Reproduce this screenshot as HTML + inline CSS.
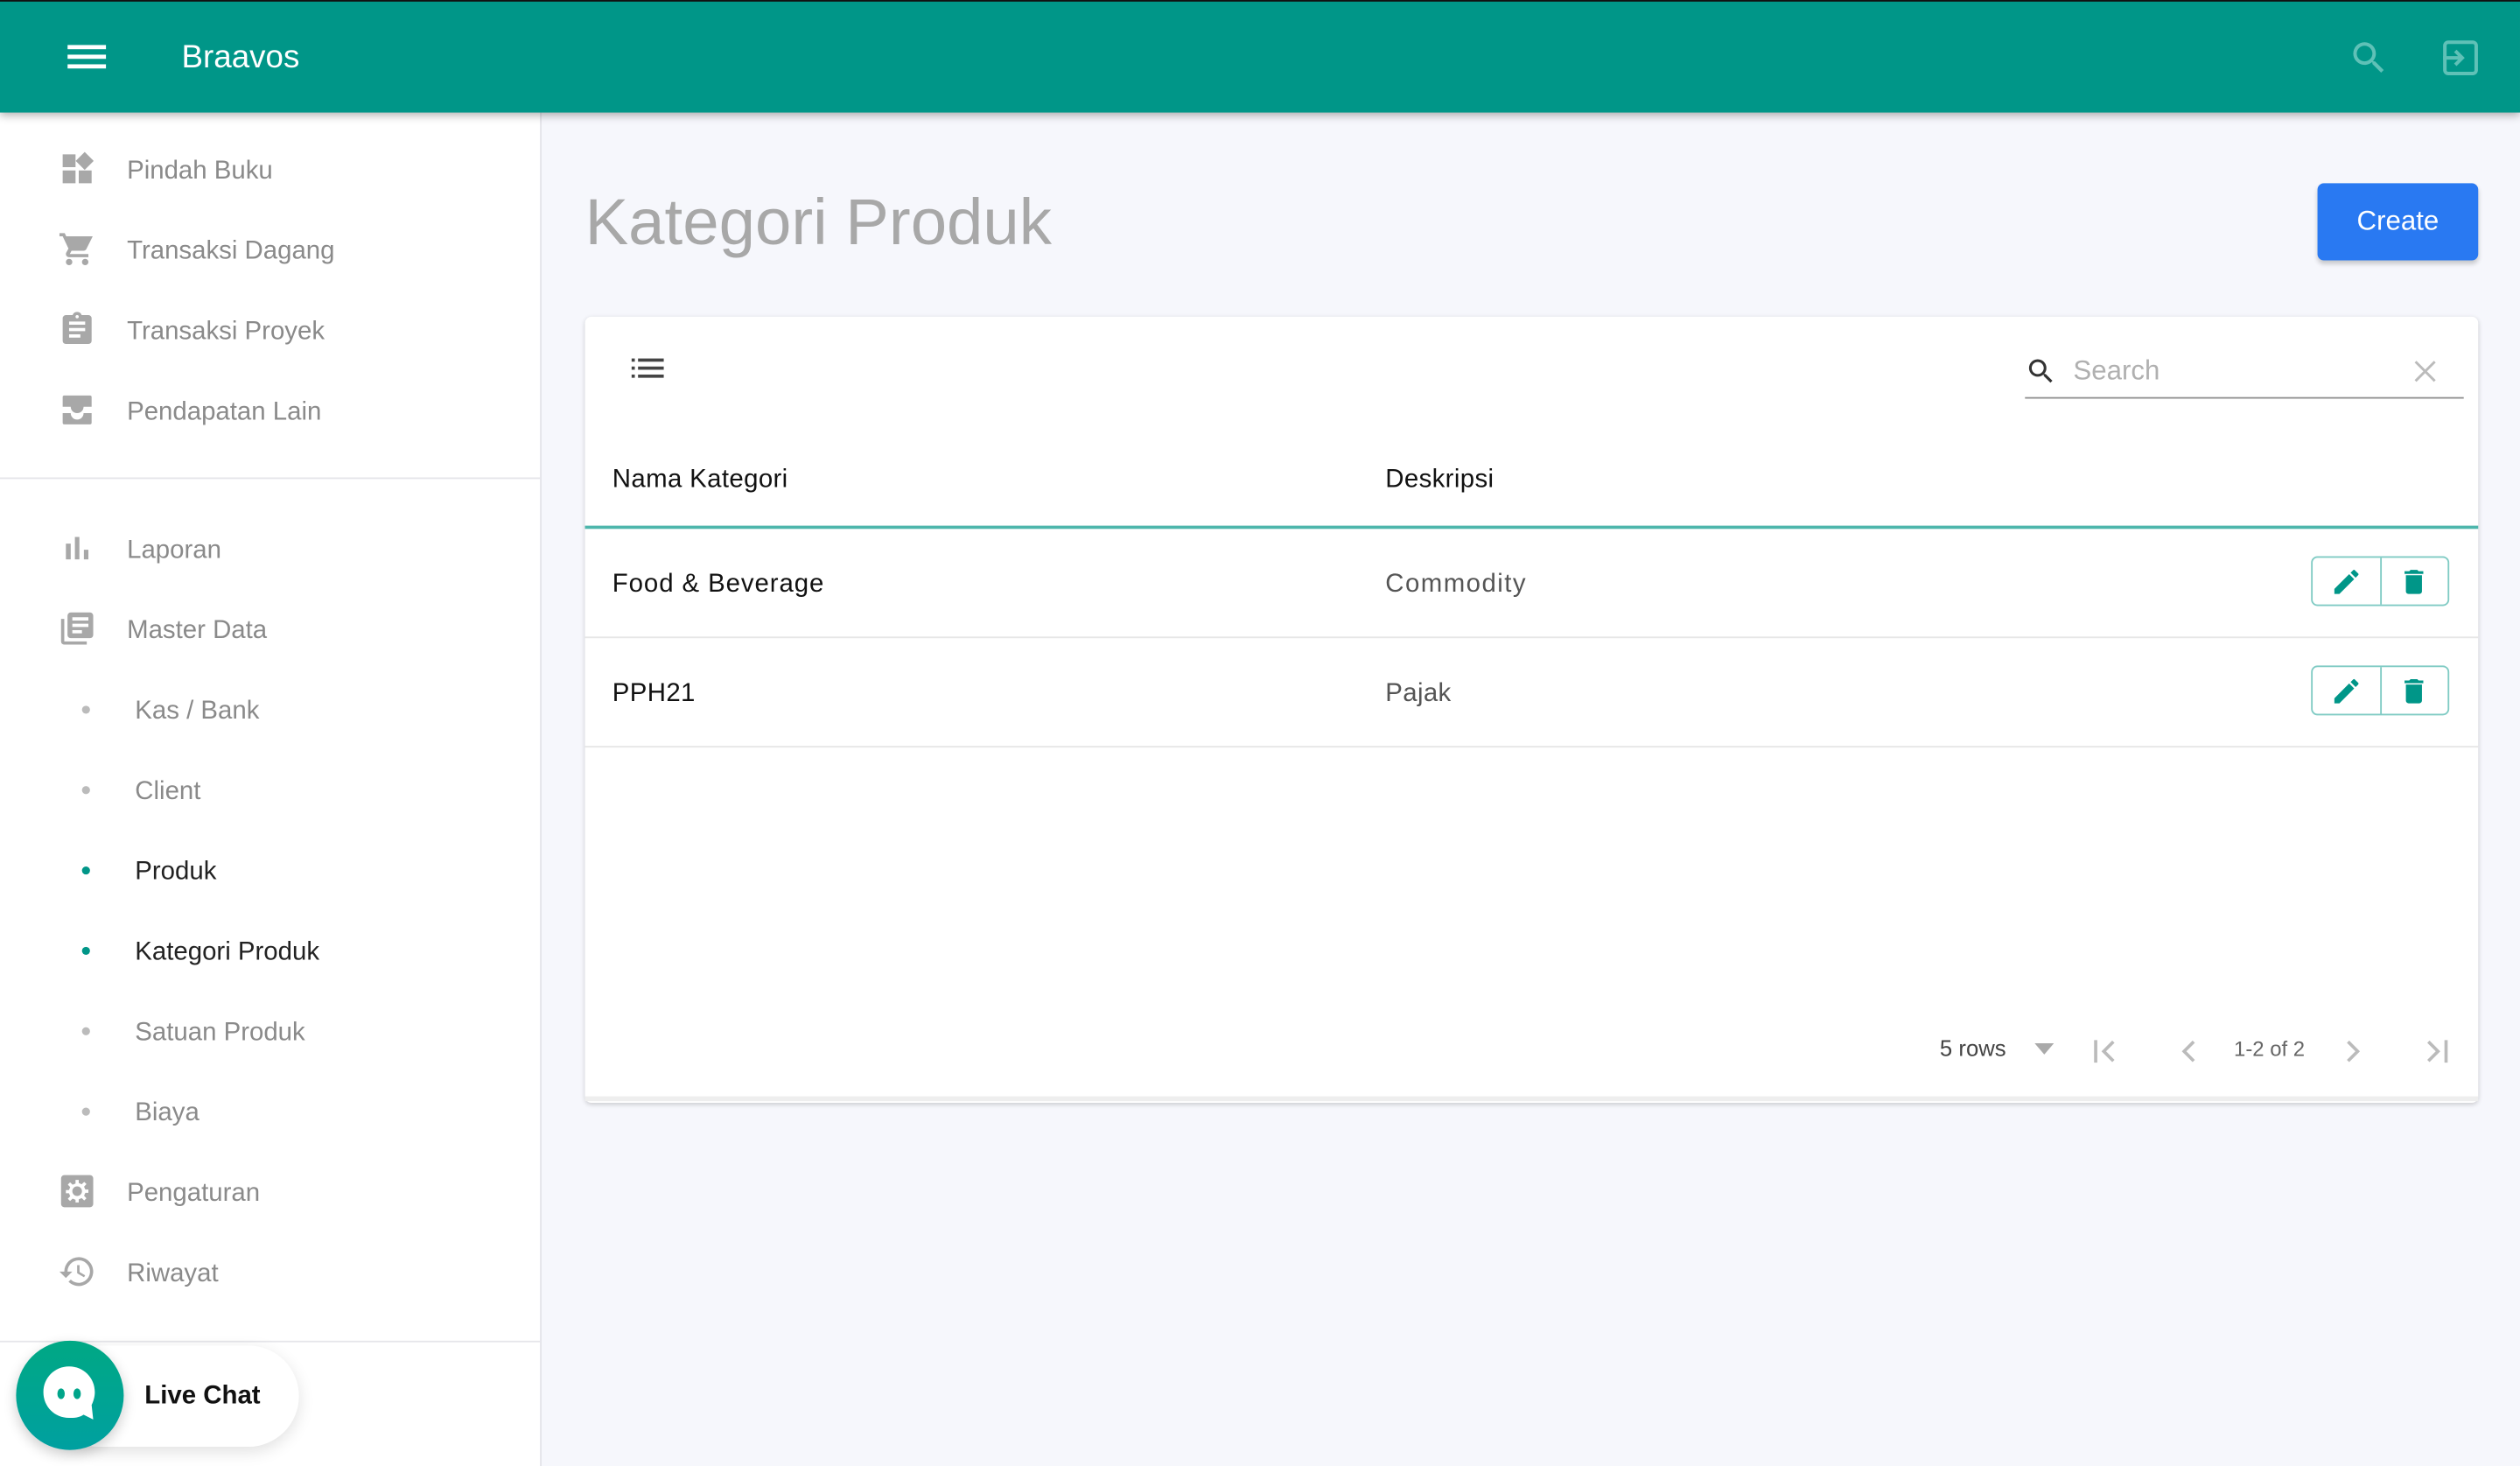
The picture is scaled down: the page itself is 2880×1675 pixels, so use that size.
<!DOCTYPE html>
<html><head><meta charset="utf-8"><style>
*{box-sizing:border-box;margin:0;padding:0}
html,body{width:2880px;height:1675px;overflow:hidden;background:#f6f7fc;font-family:"Liberation Sans",sans-serif}
#w{position:absolute;left:0;top:0;width:1568px;height:912px;transform:scale(1.83673);transform-origin:0 0;background:#f6f7fc}
.abs{position:absolute}
.top{left:0;top:0;width:1568px;height:70px;background:#009688;box-shadow:0 2px 5px rgba(0,0,0,.3);z-index:5;border-top:1px solid #111}
.side{left:0;top:70px;width:337px;height:842px;background:#fff;border-right:1px solid #e4e4ea}
.it{position:absolute;left:0;width:336px;height:50px;display:flex;align-items:center;font-size:16px;color:#8a8a8a}
.it svg{position:absolute;left:36px;width:24px;height:24px;fill:#a8a8a8}
.it span{position:absolute;left:79px;top:18px}
.sub span{left:84px}
.dot{position:absolute;left:51px;width:5px;height:5px;border-radius:50%;background:#bbb}
.act{color:#222}.act .dot{background:#009688}
.card{left:364px;top:197px;width:1178px;height:489px;background:#fff;border-radius:4px;box-shadow:0 1px 3px rgba(0,0,0,.18)}
.td{position:absolute;font-size:16px;color:#111;letter-spacing:.2px}
.btns{position:absolute;left:1074px;width:86px;height:31px;border:1px solid #80cbc4;border-radius:4px}
.btns i{position:absolute;left:42px;top:0;width:1px;height:29px;background:#80cbc4}
.btns svg{position:absolute;top:5px;width:20px;height:20px;fill:#009688}
.pg{position:absolute;top:447px;font-size:14px;color:#555}
</style></head><body><div id="w">
<div class="abs top">
<svg class="abs" style="left:42px;top:24px" width="24" height="20" viewBox="0 0 24 20"><rect x="0" y="3" width="24" height="2.6" fill="#fff"/><rect x="0" y="9" width="24" height="2.6" fill="#fff"/><rect x="0" y="15" width="24" height="2.6" fill="#fff"/></svg>
<div class="abs" style="left:113px;top:24px;color:#fff;font-size:20px">Braavos</div>
<svg class="abs" style="left:1461px;top:22px" width="26" height="26" viewBox="0 0 24 24" fill="#5fc1b7"><path d="M15.5 14h-.79l-.28-.27A6.470 6.47 0 0016 9.5 6.5 6.5 0 109.5 16c1.61 0 3.09-.59 4.23-1.570l.27.28v.79l5 4.99L20.49 19l-4.99-5zm-6 0C7.01 14 5 11.99 5 9.5S7.01 5 9.5 5 14 7.01 14 9.5 11.99 14 9.5 14z"/></svg>
<svg class="abs" style="left:1518px;top:22px" width="26" height="26" viewBox="0 0 24 24" fill="none" stroke="#5fc1b7" stroke-width="2"><rect x="3" y="3" width="18" height="18" rx="2"/><path d="M2 12h11M9 8l4 4-4 4" /></svg>
</div>
<div class="abs side">
<div class="it" style="top:10px"><svg viewBox="0 0 24 24"><path d="M3 3h8v8H3zM3 13h8v8H3zM13 13h8v8h-8zM16.7 1.5l5.6 5.6-5.6 5.6-5.6-5.6z"/></svg><span>Pindah Buku</span></div>
<div class="it" style="top:60px"><svg viewBox="0 0 24 24"><path d="M7 18a2 2 0 100 4 2 2 0 000-4zM1 2v2h2l3.6 7.59-1.35 2.45A2 2 0 007 17h12v-2H7.42l1.1-2h7.45c.75 0 1.41-.41 1.75-1.030L21.7 4H5.21l-.94-2H1zm16 16a2 2 0 100 4 2 2 0 000-4z"/></svg><span>Transaksi Dagang</span></div>
<div class="it" style="top:110px"><svg viewBox="0 0 24 24"><path d="M19 3h-4.18A3 3 0 0012 1a3 3 0 00-2.82 2H5a2 2 0 00-2 2v14a2 2 0 002 2h14a2 2 0 002-2V5a2 2 0 00-2-2zm-7 0a1 1 0 110 2 1 1 0 010-2zm2 14H7v-2h7v2zm3-4H7v-2h10v2zm0-4H7V7h10v2z"/></svg><span>Transaksi Proyek</span></div>
<div class="it" style="top:160px"><svg viewBox="0 0 24 24"><path d="M20 3H4a1 1 0 00-1 1v6h5a4 4 0 008 0h5V4a1 1 0 00-1-1zM3 14v6a1 1 0 001 1h16a1 1 0 001-1v-6h-5a4 4 0 01-8 0z"/></svg><span>Pendapatan Lain</span></div>
<div class="abs" style="left:0;top:227px;width:336px;height:1px;background:#e6e6ea"></div>
<div class="it" style="top:246px"><svg viewBox="0 0 24 24"><path d="M5 9.2h3V19H5zM10.6 5h2.8v14h-2.8zm5.6 8H19v6h-2.8z"/></svg><span>Laporan</span></div>
<div class="it" style="top:296px"><svg viewBox="0 0 24 24"><path d="M4 6H2v14a2 2 0 002 2h14v-2H4V6zm16-4H8a2 2 0 00-2 2v12a2 2 0 002 2h12a2 2 0 002-2V4a2 2 0 00-2-2zm-1 9H9V9h10v2zm-4 4H9v-2h6v2zm4-8H9V5h10v2z"/></svg><span>Master Data</span></div>
<div class="it sub" style="top:346px"><i class="dot"></i><span>Kas / Bank</span></div>
<div class="it sub" style="top:396px"><i class="dot"></i><span>Client</span></div>
<div class="it sub act" style="top:446px"><i class="dot"></i><span>Produk</span></div>
<div class="it sub act" style="top:496px"><i class="dot"></i><span>Kategori Produk</span></div>
<div class="it sub" style="top:546px"><i class="dot"></i><span>Satuan Produk</span></div>
<div class="it sub" style="top:596px"><i class="dot"></i><span>Biaya</span></div>
<div class="it" style="top:646px"><svg viewBox="0 0 24 24"><path d="M4 2h16a2 2 0 012 2v16a2 2 0 01-2 2H4a2 2 0 01-2-2V4a2 2 0 012-2zm8 7a3 3 0 100 6 3 3 0 000-6zm-1-4v2.2l-1.8.8-1.6-1.5-1.4 1.4 1.5 1.6-.8 1.8H5v2h1.9l.8 1.8-1.5 1.6 1.4 1.4 1.6-1.5 1.8.8V19h2v-1.9l1.8-.8 1.6 1.5 1.4-1.4-1.5-1.6.8-1.8H19v-2h-1.9l-.8-1.8 1.5-1.6-1.4-1.4-1.6 1.5-1.8-.8V5z"/></svg><span>Pengaturan</span></div>
<div class="it" style="top:696px"><svg viewBox="0 0 24 24"><path d="M13 3a9 9 0 00-9 9H1l3.89 3.89.07.14L9 12H6a7 7 0 112.05 4.95l-1.42 1.42A9 9 0 1013 3zm-1 5v5l4.28 2.54.72-1.21-3.5-2.08V8H12z"/></svg><span>Riwayat</span></div>
<div class="abs" style="left:0;top:764px;width:336px;height:1px;background:#e6e6ea"></div>
<div class="abs" style="left:30px;top:767px;width:156px;height:63px;background:#fff;border-radius:32px;box-shadow:0 3px 10px rgba(0,0,0,.12)"></div>
<div class="abs" style="left:10px;top:764px;width:67px;height:68px;border-radius:50%;background:linear-gradient(#00a884,#00a0a0);box-shadow:0 3px 8px rgba(0,0,0,.2)">
<svg class="abs" style="left:14px;top:15px" width="40" height="38" viewBox="0 0 40 38"><path d="M19 1C28 1 35 8 35 17c0 3-1 6-2 8l1 9-6-3c-3 2-6 2-9 2C10 33 3 26 3 17S10 1 19 1z" fill="#fff"/><ellipse cx="14" cy="18" rx="2.3" ry="3.3" fill="#00a58a"/><ellipse cx="24" cy="18" rx="2.3" ry="3.3" fill="#00a58a"/></svg></div>
<div class="abs" style="left:90px;top:790px;font-size:16px;font-weight:bold;color:#111">Live Chat</div>
</div>
<div class="abs" style="left:364px;top:115px;font-size:40.5px;color:#a8a8a8">Kategori Produk</div>
<div class="abs" style="left:1442px;top:114px;width:100px;height:48px;background:#2979f2;border-radius:4px;color:#fff;font-size:17px;display:flex;align-items:center;justify-content:center;box-shadow:0 2px 3px rgba(0,0,0,.2)">Create</div>
<div class="abs card">
<svg class="abs" style="left:28px;top:23px" width="22" height="18" viewBox="0 0 22 18" fill="#444"><rect x="1" y="3" width="2" height="2"/><rect x="5" y="3" width="16" height="2"/><rect x="1" y="8" width="2" height="2"/><rect x="5" y="8" width="16" height="2"/><rect x="1" y="13" width="2" height="2"/><rect x="5" y="13" width="16" height="2"/></svg>
<svg class="abs" style="left:896px;top:24px" width="20" height="20" viewBox="0 0 24 24" fill="#333"><path d="M15.5 14h-.79l-.28-.27A6.47 6.47 0 0016 9.5 6.5 6.5 0 109.5 16c1.61 0 3.09-.59 4.23-1.57l.27.28v.79l5 4.99L20.49 19l-4.99-5zm-6 0C7.01 14 5 11.99 5 9.5S7.01 5 9.5 5 14 7.01 14 9.5 11.99 14 9.5 14z"/></svg>
<div class="abs" style="left:926px;top:24px;font-size:17px;color:#b0b0b0">Search</div>
<svg class="abs" style="left:1138px;top:27px" width="14" height="14" viewBox="0 0 14 14" stroke="#bbb" stroke-width="1.6"><path d="M1 1l12 12M13 1L1 13"/></svg>
<div class="abs" style="left:896px;top:50px;width:273px;height:1px;background:#8f8f8f"></div>
<div class="td" style="left:17px;top:93px">Nama Kategori</div>
<div class="td" style="left:498px;top:93px">Deskripsi</div>
<div class="abs" style="left:0;top:130px;width:1178px;height:2px;background:#4db6ac"></div>
<div class="td" style="left:17px;top:158px;letter-spacing:.5px">Food &amp; Beverage</div>
<div class="td" style="left:498px;top:158px;color:#555;letter-spacing:.8px">Commodity</div>
<div class="btns" style="top:149px"><i></i><svg style="left:11px" viewBox="0 0 24 24"><path d="M3 17.25V21h3.75L17.8 9.94l-3.75-3.75zM20.7 7.04a1 1 0 000-1.41l-2.34-2.34a1 1 0 00-1.41 0l-1.83 1.83 3.75 3.75z"/></svg><svg style="left:53px" viewBox="0 0 24 24"><path d="M6 19a2 2 0 002 2h8a2 2 0 002-2V7H6zM19 4h-3.5l-1-1h-5l-1 1H5v2h14z"/></svg></div>
<div class="abs" style="left:0;top:199px;width:1178px;height:1px;background:#e6e6e6"></div>
<div class="td" style="left:17px;top:226px">PPH21</div>
<div class="td" style="left:498px;top:226px;color:#555">Pajak</div>
<div class="btns" style="top:217px"><i></i><svg style="left:11px" viewBox="0 0 24 24"><path d="M3 17.25V21h3.75L17.8 9.94l-3.75-3.75zM20.7 7.04a1 1 0 000-1.41l-2.34-2.34a1 1 0 00-1.41 0l-1.83 1.83 3.75 3.75z"/></svg><svg style="left:53px" viewBox="0 0 24 24"><path d="M6 19a2 2 0 002 2h8a2 2 0 002-2V7H6zM19 4h-3.5l-1-1h-5l-1 1H5v2h14z"/></svg></div>
<div class="abs" style="left:0;top:267px;width:1178px;height:1px;background:#e6e6e6"></div>
<div class="pg" style="left:843px;color:#444">5 rows</div>
<svg class="abs" style="left:902px;top:452px" width="12" height="7"><path d="M0 0h12L6 7z" fill="#aaa"/></svg>
<svg class="abs" style="left:938px;top:449px" width="18" height="16" viewBox="0 0 18 16" fill="none" stroke="#bbb" stroke-width="2"><path d="M2 1v14M13 2L7 8l6 6"/></svg>
<svg class="abs" style="left:992px;top:449px" width="12" height="16" viewBox="0 0 12 16" fill="none" stroke="#bbb" stroke-width="2"><path d="M9 2L3 8l6 6"/></svg>
<div class="pg" style="left:1026px;color:#666;font-size:13px;top:448px">1-2 of 2</div>
<svg class="abs" style="left:1094px;top:449px" width="12" height="16" viewBox="0 0 12 16" fill="none" stroke="#bbb" stroke-width="2"><path d="M3 2l6 6-6 6"/></svg>
<svg class="abs" style="left:1142px;top:449px" width="18" height="16" viewBox="0 0 18 16" fill="none" stroke="#bbb" stroke-width="2"><path d="M16 1v14M5 2l6 6-6 6"/></svg>
<div class="abs" style="left:0;top:485px;width:1178px;height:3px;background:#eee"></div>
</div>
</div></body></html>
